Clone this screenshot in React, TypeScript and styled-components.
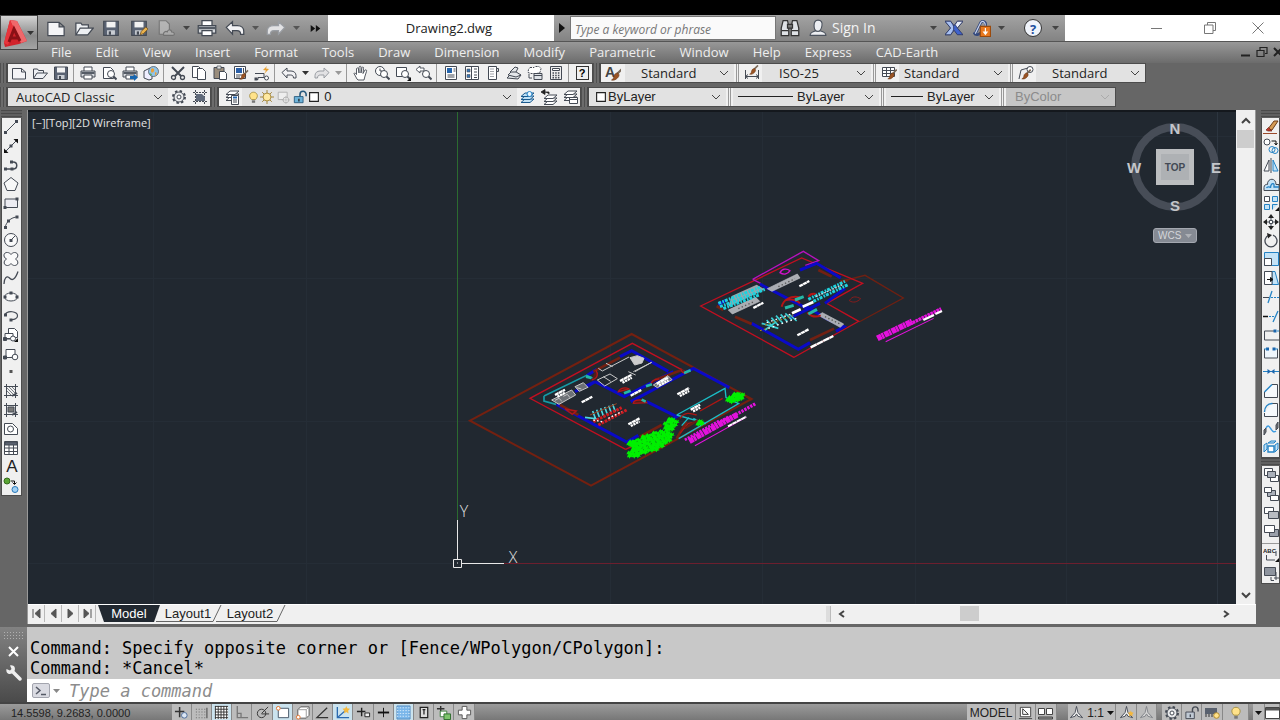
import React from 'react';
import styled, { createGlobalStyle } from 'styled-components';

const ui = '"Open Sans", "Noto Sans", sans-serif';
const arial = '"Liberation Sans", Arial, sans-serif';
const mono = '"DejaVu Sans Mono", "Liberation Mono", monospace';

const GlobalStyle = createGlobalStyle`
  * { box-sizing: border-box; }
  body { margin: 0; background: #666; font-family: ${ui}; overflow: hidden; }
  button, input, select { font: inherit; color: inherit; margin: 0; padding: 0; border: 0; border-radius: 0; background: none; }
  svg { display: block; flex: none; }
`;

/* ---------- icons, all on a 16 unit grid ---------- */
const D = '#444a54';
const B = '#2483c5';
const L = '#c4e3f7';

const paper = <path d="M1.5 3.5h9l4 3.5v7h-13z M10.5 3.5v3.5h4" fill="#f4f4f6" stroke={D} />;
const folder = (
  <g stroke={D} fill="#eef0f3">
    <path d="M1.5 13V4h4l1 1.500h5V8" />
    <path d="M1.500 13.500 5 8h10.500l-4.500 5.500z" />
  </g>
);
const disk = (
  <g>
    <path d="M1.500 2h13v12.500h-13z" fill="#5a6373" stroke={D} />
    <path d="M4 2.500h8v5H4z" fill="#f2f2f2" />
    <path d="M4.500 10h7v4h-7z" fill="#c9cdd3" />
    <path d="M6 11h2v3H6z" fill={D} />
  </g>
);
const printer = (
  <g stroke={D}>
    <path d="M4 6V2h8v4" fill="#fff" />
    <path d="M1 6h14v6H1z" fill="#d5d8dc" />
    <path d="M1.500 7h13v2h-13z" fill="#555c66" stroke="none" />
    <path d="M4 10h8v4H4z" fill="#fff" />
  </g>
);
const undo = <path d="M1 7.500 6 3v3h4c3 0 5 2 5 4.500V13h-2.500c0-2-1-3-3-3H6v3z" fill="#f2f2f4" stroke={D} />;
const redo = <path d="M15 7.500 10 3v3H6c-3 0-5 2-5 4.500V13h2.500c0-2 1-3 3-3H10v3z" fill="#e2e2e4" stroke="#999da3" />;
const glass = (
  <g stroke={D} fill="#fff">
    <circle cx="10" cy="9" r="3.500" />
    <path d="m12.500 11.500 3 3" strokeWidth="2" />
  </g>
);
const layers = (
  <g stroke={D} fill="#fff">
    <path d="m1 13.500 4-3.500h9l-4 3.500z" />
    <path d="m1 10.500 4-3.500h9l-4 3.500z" />
    <path d="m1 7.500 4-3.500h9l-4 3.500z" />
  </g>
);
const gear = (
  <g fill="none" stroke={D}>
    <circle cx="8" cy="8" r="6" strokeWidth="2" strokeDasharray="2.400 2.300" />
    <circle cx="8" cy="8" r="5" fill="#e9eaec" />
    <circle cx="8" cy="8" r="2" fill="#fff" />
  </g>
);
const bulb = (
  <g>
    <path d="M5.500 10.500C1 6 4 1.500 8 1.500s7 4.500 2.500 9z" fill="#ffe28a" stroke="#a08a3a" />
    <path d="M6 11.500h4v3H6z" fill="#777" />
  </g>
);
const lock = (
  <g>
    <path d="M9 8V5a3 3 0 0 1 6 0v2" fill="none" stroke={D} strokeWidth="1.500" />
    <path d="M2 7.500h9v7H2z" fill="#bfc9d4" stroke={D} />
    <path d="M6 10h1.500v3H6z" fill={D} />
  </g>
);
const brush = (
  <g>
    <path d="m15 3-5 5" stroke="#7a6a5a" strokeWidth="2" />
    <path d="M10.500 7c2 1 2 3 0 5s-4 2.500-6 2c2-1 2-2 2.500-4s2-3 3.500-3z" fill="#9a5324" stroke="#64330f" strokeWidth=".6" />
  </g>
);
const star = <path d="m12 1 1 2.500L16 4l-2 2 .5 3L12 7.500 9.500 9l.5-3-2-2 3-.500z" fill="#f5b83d" />;
const compassMark = <path d="M8 1.500 9.500 8l5 5.500L9.500 12 8 9.500 6.500 12l-5 1.500 5-5.500z" fill="#eee" stroke={D} />;
const dot = (x: number, y: number, c = D) => <path key={`${x}-${y}`} d={`M${x - 1.5} ${y - 1.5}h3v3h-3z`} fill={c} />;

const icons: Record<string, React.ReactNode> = {
  new: paper,
  open: folder,
  save: disk,
  saveAs: <>{disk}<path d="m9 14 1-3 4-4 2 2-4 4z" fill="#eab24c" stroke="#6a4b1c" strokeWidth=".7" /></>,
  publishGrey: <g opacity=".65"><path d="M2 1.500h6l3 3v9H2z" fill="#c4c4c4" stroke="#666" /><path d="M6 14.500c-1-3 2-4 3-3 1-3 4-2 4 0 3 0 3 3 1 3z" fill="#bbb" stroke="#666" /></g>,
  print: printer,
  undo,
  redo,
  more: <path d="M1 3 7.500 8 1 13zM8.500 3 15 8l-6.500 5z" fill="#111" />,
  preview: <><path d="M2.500 2.500h7l3 3v8h-10z" fill="#fff" stroke={D} />{glass}</>,
  publish: <>{printer}<path d="M8 11h4V9l4 3.500-4 3.500v-2H8z" fill="#1766b0" /></>,
  globe: <><path d="m1 6 6-3 2 2v9l-3 1-5-2z" fill="#eef" stroke={D} /><circle cx="10.500" cy="6.500" r="5" fill="#8fc3e8" stroke={D} strokeWidth=".7" /><path d="M8 4c2-2 4 0 3 2s-3 2-3 0zM12 7l2 1-2 3z" fill="#e9a13b" /><path d="M6 8l3 1-1 2z" fill="#5aa355" /></>,
  cut: <g stroke={D} fill="none" strokeWidth="1.300"><path d="m2 2 9 9M14 2 5 11" strokeWidth="2" /><circle cx="3.500" cy="12.500" r="2" /><circle cx="12.500" cy="12.500" r="2" /></g>,
  copy: <g stroke={D} fill="#fff"><path d="M1.500 1.500h6l2 2v9h-8z" /><path d="M6.500 3.500h5l3 3v8h-8z" /></g>,
  paste: <><path d="M2 2.500h10v11H2z" fill="#9a8d7c" stroke={D} /><path d="M5 1h4v3H5z" fill="#ddd" stroke={D} strokeWidth=".7" /><path d="M7.500 6.500h5l2 2v6h-7z" fill="#fff" stroke={D} /></>,
  match: <><path d="M1.500 1.500h11v12h-11z" fill="#fff" stroke={D} /><path d="M3 3h6v5H3z" fill="#2a5fa8" /><path d="M3 10h6M3 12h4M10.500 3v5" stroke={D} />{<g transform="translate(3 3) scale(.8)">{brush}</g>}</>,
  blockEdit: <><path d="M1 8.500h9v4H4M1 14.500h3v-2" fill="none" stroke={D} /><circle cx="12.500" cy="13" r="2" fill="#fff" stroke={D} />{dot(2, 14)}<path d="m13 1-4 4 3 .5-2 3.500 5-5-3-.500z" fill="#e8a030" /></>,
  pan: <path d="M4 14 1 8.500c.5-1 1.500-.5 2.500 1L3.500 3.500c1-1 2-.5 2 .5l.500 4V2c.5-1 2-1 2 0v6l1-5.500c.5-1 2-.5 1.500 1L10 8.500l2-3.500c1-.5 2 0 1.500 1.500L12 11l-1 4H5z" fill="#fff" stroke={D} strokeWidth=".9" />,
  zoomTime: <><circle cx="6" cy="6" r="4.500" fill="#fff" stroke={D} /><path d="M6 3.500V6h2.500" fill="none" stroke={D} />{glass}</>,
  zoomWin: <><path d="M1.500 2.500h10v9h-10z" fill="#fff" stroke={D} />{glass}<path d="M16 12v4h-4z" fill="#111" /></>,
  zoomPrev: <>{glass}<path d="M0 4.500 4 1v2h4v3H4v2z" fill="#fff" stroke={D} strokeWidth=".9" /></>,
  props: <><path d="M2.500 1.500h11v13h-11z" fill="#fff" stroke={D} /><path d="M4 3h5v5H4z" fill="#2565ad" /><path d="M10.500 4h2M10.500 6h2M4.500 10h7M4.500 12h7" stroke={D} /></>,
  center: <g stroke={D}><path d="M1.500 1.500h13v13h-13z" fill="#fff" /><path d="M7.500 2v12M10 4h3M10 7h3M10 10h3M10 12.500h3" /><path d="M3 4h3v3H3zM3 9.500h3v3H3z" fill="#3978b8" strokeWidth=".6" /></g>,
  palette: <g stroke={D}><path d="M3.500 1.500h8v13h-8z" fill="#fff" /><path d="M11.500 3.500h2v3h-2z" fill="#ddd" /><path d="M5.500 4h4M5.500 6.500h4M5.500 9h4M5.500 11.500h4" strokeDasharray="1 1" /></g>,
  sheets: <g stroke={D} fill="#e4e7ea"><path d="m1 13 3-3h11l-3 4z" /><path d="m2 10 5-5 8 5-5 2z" /><path d="m4 7 5-5 3 1-2 4z" /></g>,
  markup: <g stroke={D} fill="#fff"><path d="M3 2.500h4l1-1h4l2 2-1 4-3 1H4l-3-1 .5-3z" strokeDasharray="2 1" /><path d="M7 8.500h8v6H7z" fill="#dfe3e8" /><path d="M2 9v4h3M7 10.500h8" /></g>,
  calc: <g stroke={D}><path d="M2.500 1.500h11v13h-11z" fill="#eee" /><path d="M4.500 3.500h7v2h-7z" fill="#fff" /><path d="M4.500 8h7M4.500 10.500h7M4.500 12.800h7" strokeDasharray="1.500 1.200" strokeWidth="1.500" /></g>,
  textStyle: <><text x="0" y="12" fontSize="14" fontFamily={arial} fontWeight="700" fill="#444">A</text>{<g transform="translate(2 1)">{brush}</g>}</>,
  dimStyle: <><path d="M1.500 5v9M14.500 5v9M1.500 11.500h13M4 9.500l-2.500 2L4 13.500M12 9.500l2.500 2-2.500 2" stroke={D} fill="none" /><g transform="translate(2 -2) scale(.8)">{brush}</g></>,
  tableStyle: <><path d="M1.500 2.500h12v9h-12zM1.500 5.500h12M1.500 8.500h12M5.500 3v8M9.500 3v8" stroke={D} fill="#fff" /><g transform="translate(3 2) scale(.85)">{brush}</g></>,
  leaderStyle: <><path d="M1 14 3 5l7-2 1 1" fill="none" stroke={D} /><circle cx="12" cy="4.500" r="3" fill="#fff" stroke={D} /><g transform="translate(0 2) scale(.85)">{brush}</g></>,
  gear,
  workspace: <><path d="M1 3.500h14M1 12.500h14M3.500 1v14M12.500 1v14" stroke={D} strokeDasharray="2 1" /><path d="M4 5h6l3 3v4H4z" fill="#606a7a" /></>,
  layerProps: <><g transform="translate(2 -2)">{layers}</g><path d="M8.500 6.500h7v9h-7z" fill="#fff" stroke={D} /><path d="M10 8.500h4" stroke="#2565ad" strokeWidth="2" /><path d="M10 11h4M10 13h4" stroke={D} /></>,
  bulb,
  sun: <><path d="M8 0v16M0 8h16M2.500 2.500l11 11M13.500 2.500l-11 11" stroke="#9a7b2a" /><circle cx="8" cy="8" r="4.500" fill="#ffe9a0" stroke="#a08030" /></>,
  vpFreeze: <g stroke="#aaa" fill="#eee"><path d="M1.500 1.500h11v9h-11z" /><circle cx="11" cy="11" r="3.500" /><path d="M11 6v10M6 11h10" strokeWidth=".7" /></g>,
  lockBlue: <><path d="M8 8V5a3.500 3.500 0 0 1 7 0v2" fill="none" stroke="#26587c" strokeWidth="1.800" /><path d="M1.500 7.500h10v7h-10z" fill="#6db2d8" stroke="#26587c" /><path d="M6 10h1.500v3H6z" fill="#222" /></>,
  swatch: <path d="M3 3h10v10H3z" fill="#fff" stroke="#222" strokeWidth="1.300" />,
  layerCur: <>{<g stroke="#1b5a8e" fill="#bfe0f5"><path d="m1 13.500 4-3.500h9l-4 3.500z" /><path d="m1 10.500 4-3.500h9l-4 3.500z" /><path d="m1 7.500 4-3.500h9l-4 3.500z" /></g>}<circle cx="9.500" cy="5" r="2.500" fill="#eaf6ff" stroke={B} /></>,
  layerPrev: <><g transform="translate(2 2)">{layers}</g><path d="M0 3 4 .500V5.500zM4 3h4v2" fill="#222" stroke="#222" strokeWidth=".8" /></>,
  layerStates: <><g transform="translate(1 -2)">{layers}</g><path d="M7.500 8.500h8v6h-8zM7.500 10.500h8" fill="#fff" stroke={D} /></>,
  line: <><path d="M2 14 14 2" stroke={D} />{dot(2.500, 13.500)}{dot(13.500, 2.500)}</>,
  xline: <><path d="M2 14 14 2" stroke={D} />{dot(8, 8)}<path d="M1 15v-4.500L5.500 15zM15 1v4.500L10.500 1z" fill="#111" /></>,
  pline: <><path d="M2 12h8c5 0 5-7 0-7H8" fill="none" stroke={D} strokeWidth="1.500" />{dot(2.500, 12)}{dot(9, 12)}{dot(8.500, 5)}</>,
  polygon: <path d="m8 1.500 7 5.500-3 7.500H4L1 7z" fill="#f8f8f8" stroke={D} />,
  rect: <><path d="M2 4h12.500v8.500H2z" fill="#ececf2" stroke={D} />{dot(2, 12.500)}{dot(14, 4)}</>,
  arc: <><path d="M2 14C3 8 8 3 14.500 3" fill="none" stroke={D} />{dot(2.500, 13.500)}{dot(5.500, 7)}{dot(14, 3)}</>,
  circle: <><circle cx="8" cy="8" r="6.500" fill="#fafafa" stroke={D} /><path d="m8 8 4-4" stroke={D} />{dot(8, 8.500)}</>,
  cloud: <path d="M3.500 8C-.500 6 .500 1 4.500 1.500 6 1.500 7 2.500 8 3.500c1-1 2-2 3.500-2 4 0 4.500 4.500 1 6.500 3.500 2 3 6.500-1 6.500-1.500 0-2.500-1-3.500-2-1 1-2 2-3.500 2-4 0-4.500-4.500-1-6.500z" fill="#fafafa" stroke={D} />,
  spline: <path d="M1 14c0-6 3-9 5.500-6S12 10 15 1.500" fill="none" stroke={D} strokeWidth="1.300" />,
  ellipse: <><ellipse cx="8" cy="8" rx="6.500" ry="4" fill="#fafafa" stroke={D} />{dot(2, 8)}{dot(14, 8)}{dot(8, 4)}</>,
  ellArc: <><path d="M2 7c2-5 13-4 12.500 1 0 2-3 4-6.500 3.500" fill="none" stroke={D} strokeWidth="1.200" />{dot(2.500, 7)}{dot(8, 12)}</>,
  insert: <g stroke={D} fill="#fff"><path d="M5.500 6V1.500h6l3 3v6H12" /><path d="M2 11.500V6.500h8v5z" /><circle cx="10" cy="11.500" r="2.500" /><path d="M1 12h6" />{dot(2, 12)}<path d="M15 11v4h-4z" fill="#111" stroke="none" /></g>,
  block: <g stroke={D} fill="#fff"><path d="M3 11.500V3.500h9v6" /><path d="M1 11.500h8" />{dot(2, 11.500)}<circle cx="12" cy="11" r="2.800" /></g>,
  point: dot(8, 7.500, '#555'),
  hatch: <g stroke={D}><path d="M1 3.500h14M1 12.500h14M3.500 1v14M12.500 1v14" /><path d="m4 8 4 4M4 5l7 7M6 4l6 6M9 4l3 3" strokeWidth=".7" /><path d="m9 13 5-3" strokeWidth="2" /></g>,
  gradient: <g stroke={D}><path d="M1 3.500h14M1 12.500h14M3.500 1v14M12.500 1v14" /><path d="M5 5h6v5H5z" fill="#777" /><path d="m9 13 5-3" strokeWidth="2" /></g>,
  region: <g stroke={D} fill="#fff"><path d="M1.500 2.500h8l5 5v6h-13z" /><circle cx="7.500" cy="8" r="3" /></g>,
  table: <g stroke={D}><path d="M1.500 1.500h13v13h-13z" fill="#fff" /><path d="M2 2h12v3H2z" fill="#5b6270" /><path d="M2 8h12M2 11.500h12M6 5v9M10.500 5v9" /></g>,
  addSel: <><circle cx="4" cy="4" r="3" fill="#5aa535" stroke="#356b1d" /><circle cx="12" cy="12.500" r="3" fill="#9fd0f5" stroke="#2a78b8" /><path d="M8 4h3.500v3M9.500 5.500l2 2 2-2" fill="none" stroke="#111" /></>,
  erase: <><path d="M0 14.500h14" stroke="#9b4a2c" /><path d="m5 10 6-8h4l-6 9z" fill="#d39a54" stroke="#6b3d18" /><path d="m3 11 2.500-2.500L9 12H5z" fill="#c0392b" stroke="#6b2418" strokeWidth=".7" /></>,
  copyObj: <><circle cx="4" cy="4" r="3" fill="#fff" stroke={D} /><path d="M8.500 3H13v3.500M11.500 5 13 7l1.500-2" fill="none" stroke="#111" /><g stroke={B} fill="none"><circle cx="9" cy="11.500" r="3" /><circle cx="12" cy="12.500" r="3" /></g></>,
  mirror: <><path d="M6 3v11H1z" fill="#fff" stroke={D} /><path d="M8 1v15" stroke={D} /><path d="M10 3v11h5z" fill={L} stroke={B} /></>,
  offset: <g fill="none"><path d="M1 14.500v-3C1 9 3 8 4.500 8.500 4 2 13 1 13 8.500h3v6z" stroke={D} fill={L} /><path d="M3.500 12c1-2 4-1 4 0 0-5 3-5 3.500-3.500V11h5" stroke={B} strokeWidth="1.300" /></g>,
  array: <g stroke={B} fill={L}><path d="M1.500 1.500h5v5h-5z" fill="#fff" stroke={D} /><path d="M9.500 1.500h5v5h-5zM1.500 9.500h5v5h-5zM9.500 14.500v-5h5" /><path d="M16 12v4h-4z" fill="#111" stroke="none" /></g>,
  move: <><path d="M8 2v12M2 8h12" stroke={D} strokeDasharray="4 4" /><path d="m8 0 3 4H5zM8 16l3-4H5zM0 8l4-3v6zM16 8l-4-3v6z" fill="#222" /><path d="M6.500 6.500h3v3h-3z" fill="#fff" stroke={D} /></>,
  rotate: <><path d="M6 3.200A6 6 0 1 0 10 3.200" fill="none" stroke={D} strokeWidth="1.300" /><path d="m4 1 5 2-4 3.500z" fill="#222" /></>,
  scale: <><path d="M1.500 1.500h14v13h-14z" fill={L} stroke={B} /><path d="M1.500 7.500h7v7h-7z" fill="#fff" stroke={D} /></>,
  stretch: <><path d="M9 1.500h3l3.500 13H9z" fill={L} stroke={B} /><path d="M1.500 1.500H9v13H1.500z" fill="#fff" stroke={D} /><path d="M4 9.500h5M7.500 7.500l2.500 2-2.500 2z" stroke="#111" fill="#111" /></>,
  trim: <><path d="M0 8.500h6" stroke={D} /><path d="M8 8.500h8" stroke={B} strokeDasharray="2 1" /><path d="m5 14 4-12" stroke={B} strokeWidth="1.300" /></>,
  extend: <><path d="M0 8.500h5" stroke="#111" strokeWidth="1.500" /><path d="M6 8.500h5" stroke={B} strokeDasharray="2 1" /><path d="m10 14 5-11" stroke={B} strokeWidth="1.300" /></>,
  breakPt: <><path d="M11 4H1.500v9H16" fill="none" stroke={D} />{dot(12, 4, '#1b66ae')}<path d="M14 4h2" stroke={B} /></>,
  break: <><path d="M1.500 4v9h13V4" fill="#eef5fb" stroke={D} />{dot(4.500, 4, '#1b66ae')}{dot(11, 4, '#1b66ae')}<path d="M1 4h3M12 4h3" stroke={B} /></>,
  join: <><path d="M0 7.500h16" stroke={B} /><path d="m4.500 5 3.500 2.500L4.500 10zM11.500 5 8 7.500l3.500 2.500z" fill="#1b66ae" /></>,
  chamfer: <><path d="M9 1.500h5.500v13h-13V9" fill="#f6f9fc" stroke={D} /><path d="m1.500 9 7.500-7.500" stroke={B} strokeWidth="1.400" /></>,
  fillet: <><path d="M9 1.500h5.500v13h-13V11" fill="#f6f9fc" stroke={D} /><path d="M1.500 10c0-5 3-8.500 8-8.500" fill="none" stroke={B} strokeWidth="1.400" /></>,
  blend: <><path d="M1 14V9l2-2v4zM13 9V4l2-3v6z" fill="#777" stroke={D} /><path d="M3 7c4-7 5 7 10 3" fill="none" stroke="#3d9be0" strokeWidth="1.500" /></>,
  explode: <g stroke={B} fill={L}><path d="m1 6 3-2v6l-3 3zM12 6l3-2v6l-3 3z" /><path d="M5 7h6v6H5z" fill="#fff" strokeWidth="1.400" /><path d="m5 4 3-2h5l-2 2z" /></g>,
  front: <g stroke={D} fill="#fff"><path d="M1.500 1.500h8v7h-8zM7.500 8.500h8v6h-8z" /><path d="M4.500 4.500h8v6h-8z" fill="#aab0ba" /></g>,
  back: <g stroke={D}><path d="M4.500 4.500h8v6h-8z" fill="#aab0ba" /><path d="M1.500 1.500h7v5h-7zM7.500 9.500h8v5h-8z" fill="#fff" /></g>,
  above: <g stroke={D}><path d="M1.500 2.500h9v6h-9z" fill="#fff" /><path d="M5.500 6.500h10v7h-10z" fill="#b9bcc2" /></g>,
  under: <g stroke={D}><path d="M6.500 6.500h9v7h-9z" fill="#9aa0aa" /><path d="M1.500 2.500h10v7h-10z" fill="#fff" /></g>,
  textFront: <><text x="0" y="6" fontSize="6" fontWeight="700" fontFamily={arial} fill="#222">ABC</text><path d="M3.500 8v5H12M13 4v5" fill="none" stroke={D} /><path d="M16 11v4h-4z" fill="#111" /></>,
  hatchBack: <><path d="M1.500 1.500h11v8h-11z" fill="#8e949e" stroke={D} /><path d="M8 11v3.500h3M13 6v8M11 12h5" fill="none" stroke={D} /></>,
  binoculars: <g stroke="#333" fill="#dfe2e6"><path d="M2.500 2h3.500l1 5v7H1V8zM10 2h3.500L15 8v6H9V7z" /><path d="M6 5h4v3H6z" fill="#777" /><path d="M1.500 10h5M9.500 10h5" /></g>,
  user: <g stroke="#4b525d" fill="#eceef2"><path d="M1 14.500c0-3 3-3.500 5-4h4c2 .5 5 1 5 4z" /><path d="M8 1c3 0 4 2 3.500 5S10 11 8 11 4.500 9 4.500 6 5 1 8 1z" /></g>,
  exchange: <g stroke="#26305c" strokeWidth=".7"><path d="M0 2h5l3 4 3-4h5l-5 6 5 6h-5l-3-4-3 4H0l5-6z" fill="#4063cc" /><path d="M0 2h5l2 3c1 2 1 4 0 6l-2 3H0l5-6z" fill="#a9c1f2" /><path d="M11 2h5l-5 6-2-3z" fill="#e8ecf8" /></g>,
  share: <><path d="M2 13 7 3c2-2 5 0 4 3M1 12c1 3 5 2 6 0" fill="none" stroke="#33497e" strokeWidth="2.500" /><path d="M2 13 7 3c2-2 4 0 4 3" fill="none" stroke="#c7d3ee" /><path d="M6.500 6.500h9v9h-9z" fill="#e8781e" stroke="#9b4a0c" /><path d="M11 8v4M9.500 11.500h3L11 13.500z" fill="#fff" stroke="#fff" /></>,
  snap: <><path d="M1 7h10M6 2v11" stroke="#333" strokeWidth="1.600" /><circle cx="11" cy="11" r="3" fill="#dbe6f4" stroke="#4b6a96" /></>,
  dots: <g fill="#666">{[2, 5, 8, 11].map(x => [4, 7, 10, 13].map(y => <path key={`${x}${y}`} d={`M${x} ${y}h1v1h-1z`} />))}<path d="M13 3h1.500v11H13z" /></g>,
  grid: <><path d="M1 1h14v14H1z" fill="#fff" /><path d="M1 1.500h14M1 4.500h14M1 7.500h14M1 10.500h14M1 13.500h14M1.500 1v14M4.500 1v14M7.500 1v14M10.500 1v14M13.500 1v14" stroke="#333" /></>,
  ortho: <path d="M3.500 1v12.500H15M3.500 9h4v4" fill="none" stroke="#777" strokeWidth="1.400" />,
  polar: <g fill="none" stroke="#333"><circle cx="7" cy="9" r="4.500" /><path d="m7 9 7-7M7 9.500h8" /></g>,
  osnap: <><path d="M3.500 3.500h11v10h-11z" fill="#fff" stroke="#456" /><circle cx="3.500" cy="3.500" r="2" fill="#fff" stroke="#e0702a" /></>,
  osnap3d: <><path d="m3 5 3-3h9v9l-3 3H3z" fill="#fff" stroke="#555" /><path d="M3 5h9v9M12 5l3-3" fill="none" stroke="#999" /><circle cx="3.500" cy="13" r="2" fill="#fff" stroke="#e0702a" /></>,
  otrack: <path d="M14 13.500H2L13 3" fill="none" stroke="#333" strokeWidth="1.300" />,
  ducs: <><path d="M2.500 2v11.500H15M3 13l8-7" fill="none" stroke="#2a6ab0" strokeWidth="1.400" /><g transform="translate(0 0)">{star}</g></>,
  dyn: <><path d="M1 7h9M6 3v9" stroke="#222" strokeWidth="1.500" /><path d="M9.500 8.500h5v4h-5z" fill="#eee" stroke="#222" /></>,
  lwt: <><path d="M2 8h12" stroke="#111" strokeWidth="2" /><path d="M8 3v10" stroke="#111" /></>,
  tpy: <><path d="M1 1h14v14H1z" fill="#7ab6ea" stroke="#5b8fc0" /><path d="M1 3h14M1 6h14M1 9h14M1 12h14" stroke="#dcedfb" strokeDasharray="1.500 1.500" /></>,
  qp: <path d="M4.500 2.500h8v11h-8zM7 5h3M8.500 5v5" fill="#ddd" stroke="#222" strokeWidth="1.300" />,
  cycle: <><path d="M1 4h8M5 1v7" stroke="#333" strokeWidth="1.500" /><path d="M4.500 6.500h7v6h-7z" fill="#fff" stroke="#3a7f3a" /><path d="M8.500 9.500h7v6h-7z" fill="#7cc46b" stroke="#2c6b2c" /></>,
  plus: <path d="M5.500 1.500h5v4h4v5h-4v4h-5v-4h-4v-5h4z" fill="#fff" stroke="#555" />,
  layoutTri: <><path d="M2.500 2.500h11v10h-11z" fill="#fff" stroke="#444" /><path d="M5 4v6h6z" fill="none" stroke="#333" /><path d="M1 14.500h14" stroke="#444" /></>,
  quickView: <g stroke="#444" fill="#fff"><path d="M.500 3.500h6v6h-6zM8.500 3.500h6v6h-6z" /><path d="M.500 12h14v2H.500z" fill="#999" /></g>,
  annot: compassMark,
  annotStar: <>{compassMark}<g transform="translate(3 5) scale(.8)">{star}</g></>,
  annotGrey: <g opacity=".5">{compassMark}</g>,
  lock,
  hardware: <><path d="M1 3h12v6H1z" fill="#59616e" /><path d="M2 9v3M5 9v3M8 9v3M11 9v3" stroke="#333" /><circle cx="12.500" cy="10.500" r="2.800" fill="#ffe28a" stroke="#b08a30" /></>,
  clean: <><path d="M1.500 2.500h14v11h-14z" fill="#fff" stroke="#444" /><path d="M2 3h13v2.500H2z" fill="#555" /></>,
};

const Icon = ({ name, size = 16 }: { name: string; size?: number }) => (
  <svg width={size} height={size} viewBox="0 0 16 16" aria-hidden="true">{icons[name]}</svg>
);
const Caret = ({ color = '#333' }: { color?: string }) => (
  <svg width="7" height="4" viewBox="0 0 7 4" aria-hidden="true"><path d="M0 0h7L3.500 4z" fill={color} /></svg>
);
const Chevron = ({ dir = 'down', color = '#444', bold }: { dir?: string; color?: string; bold?: boolean }) => {
  const d: Record<string, string> = { down: 'm1 3 4 4 4-4', up: 'm1 7 4-4 4 4', left: 'M7 2 3 5l4 3', right: 'm3 2 4 3-4 3' };
  return (
    <svg width="10" height="10" viewBox="0 0 10 10" aria-hidden="true">
      <path d={d[dir]} fill="none" stroke={color} strokeWidth={bold ? 2 : 1} />
    </svg>
  );
};

/* ---------- frame ---------- */
const Window = styled.div`
  display: flex;
  flex-direction: column;
  height: 100vh;
  overflow: hidden;
  background: #666;
  border-top: 15px solid #000;
`;
const TitleBar = styled.header`
  flex: none;
  display: flex;
  height: 27px;
  background: linear-gradient(#a3a3a3, #838383);
  border-bottom: 1px solid #555;
`;
const AppSlot = styled.div`
  position: relative;
  width: 42px;
  flex: none;
`;
const AppButton = styled.button`
  position: absolute;
  z-index: 2;
  left: 0;
  top: 0;
  width: 38px;
  height: 35px;
  display: flex;
  align-items: center;
  justify-content: space-between;
  padding: 0 3px 0 2px;
  background: linear-gradient(#d4d4d4, #8a8a8a 60%, #a4a4a4);
  border: 1px solid #444;
`;
const Cell = styled.button<{ $w: number }>`
  flex: none;
  width: ${p => p.$w}px;
  display: flex;
  align-items: center;
  justify-content: center;
`;
const FileTitle = styled.h1`
  flex: 1;
  margin: 0;
  background: #fff;
  color: #222;
  font-size: 13px;
  line-height: 26px;
  font-weight: 400;
  text-align: center;
  padding-left: 16px;
`;
const Search = styled.input`
  width: 206px;
  height: 24px;
  margin: 1px 0;
  padding: 2px 4px 0;
  background: #fafafa;
  border: 1px solid #777;
  font-size: 12px;
  font-style: italic;
  &::placeholder { color: #777; opacity: 1; }
`;
const SignIn = styled.button`
  width: 94px;
  color: #f4f4f4;
  font-size: 14px;
  line-height: 26px;
  text-align: left;
`;
const HelpDot = styled.span`
  display: grid;
  place-items: center;
  width: 18px;
  height: 18px;
  border: 1px solid #333;
  border-radius: 50%;
  background: #f0f4fb;
  color: #1d4f9f;
  font-size: 13px;
  font-weight: 700;
`;
const WindowControls = styled.div`
  display: flex;
  justify-content: flex-end;
  width: 215px;
  background: #fff;
`;

const MenuBar = styled.nav`
  flex: none;
  display: flex;
  align-items: center;
  height: 21px;
  padding: 0 0 2px 51px;
  background: linear-gradient(#989898, #6c6c6c);
  gap: 24px;
  color: #eee;
  font-size: 13px;
  line-height: 18px;
`;
const MdiControls = styled.div`
  display: flex;
  align-items: center;
  gap: 4px;
  margin-left: auto;
  margin-right: -4px;
`;

/* ---------- toolbars ---------- */
const Row = styled.div<{ $h: number }>`
  flex: none;
  display: flex;
  align-items: flex-start;
  height: ${p => p.$h}px;
`;
const Grip = styled.div`
  flex: none;
  width: 8px;
  height: 20px;
  background: repeating-linear-gradient(90deg, #505050 0 1px, #6c6c6c 1px 3px);
  border-right: 2px solid #4a4a4a;
`;
const Panel = styled.div`
  display: flex;
  flex: none;
  height: 20px;
  background: #f0f0f0;
  border: 1px solid #4c4c4c;
  border-width: 1px 1px 1px 0;
`;
const Sep = styled.span`
  flex: none;
  width: 2px;
  margin: 0 2px;
  border-left: 1px solid #999;
`;
const DoubleSep = styled.span`
  flex: none;
  width: 3px;
  margin: 0 2px;
  border: 1px solid #999;
  border-width: 0 1px;
`;
const Combo = styled.label<{ $w: number; $off?: boolean }>`
  position: relative;
  flex: none;
  display: flex;
  align-items: center;
  width: ${p => p.$w}px;
  padding: 0 5px;
  background: ${p => (p.$off ? '#c6c6c6' : '#e2e2e2')};
  color: ${p => (p.$off ? '#8b8b8b' : '#222')};
  font-size: 12px;
`;
const Select = styled.select<{ $pad: number; $arial?: boolean }>`
  appearance: none;
  flex: 1;
  min-width: 0;
  height: 18px;
  line-height: 18px;
  padding-left: ${p => p.$pad}px;
  font-family: ${p => (p.$arial ? '"Liberation Sans", Arial, sans-serif' : 'inherit')};
  font-size: 13px;
  &:disabled { opacity: 1; color: inherit; }
`;

type PickProps = { w: number; value: string; label: string; pad?: number; rule?: number; arial?: boolean; off?: boolean; children?: React.ReactNode };
const Pick = ({ w, value, label, pad = 0, rule, arial: useArial, off, children }: PickProps) => (
  <Combo $w={w} $off={off}>
    {children}
    {rule && <svg width={rule} height="2" aria-hidden="true"><path d={`M0 .5h${rule}`} stroke="#222" /></svg>}
    <Select $pad={pad} $arial={useArial} aria-label={label} disabled={off}><option>{value}</option></Select>
    <Chevron color={off ? '#aaa' : '#444'} />
  </Combo>
);

const Tool = ({ name, w = 21 }: { name: string; w?: number }) => (
  <Cell $w={w} type="button" aria-label={name}><Icon name={name} /></Cell>
);
const Drop = ({ color, w = 12 }: { color?: string; w?: number }) => (
  <Cell $w={w} type="button" aria-label="More options"><Caret color={color} /></Cell>
);
const HelpBox = styled.span`
  display: grid;
  place-items: center;
  width: 13px;
  height: 14px;
  border: 1px solid #333;
  font: 700 11px ${arial};
`;

/* ---------- work area ---------- */
const Work = styled.main`
  flex: 1;
  min-height: 0;
  display: grid;
  grid-template-columns: 28px minmax(0, 1fr) 20px 24px;
  grid-template-rows: minmax(0, 1fr) 20px;
  padding-bottom: 3px;
`;
const Dock = styled.aside<{ $right?: boolean }>`
  grid-row: 1 / 3;
  grid-column: ${p => (p.$right ? 4 : 1)};
  display: flex;
  flex-direction: column;
  padding-left: ${p => (p.$right ? 5 : 1)}px;
  padding-right: ${p => (p.$right ? 0 : 5)}px;
  border-right: ${p => (p.$right ? 0 : 1)}px solid #999;
`;
const DockGrip = styled.div`
  flex: none;
  height: 8px;
  background: repeating-linear-gradient(#4a4a4a 0 1px, #606060 1px 3px);
`;
const DockTools = styled.div<{ $h: number }>`
  flex: none;
  display: flex;
  flex-direction: column;
  height: ${p => p.$h}px;
  background: #f0f0f0;
  border: 1px solid #4c4c4c;
  border-top: 0;
`;
const DockButton = styled.button`
  flex: 1;
  min-height: 0;
  display: flex;
  align-items: center;
  padding-left: 1px;
`;
const TextTool = styled(DockButton)`
  justify-content: center;
  font: 17px/18px ${arial};
  color: #222;
`;
const Rule = styled.span`
  height: 1px;
  margin: 2px 0;
  background: #999;
`;
const Canvas = styled.section`
  position: relative;
  min-width: 0;
  background: #212830;
  border-top: 2px solid #14181d;
  overflow: hidden;
`;
const ViewLabel = styled.div`
  position: absolute;
  left: 4px;
  top: 3px;
  color: #e4e4e4;
  font-size: 11px;
  line-height: 16px;
`;
const Compass = styled.div`
  position: absolute;
  right: 10px;
  top: 4px;
  width: 102px;
  display: flex;
  flex-direction: column;
  align-items: center;
  gap: 10px;
`;
const TopFace = styled.button`
  position: absolute;
  left: 32px;
  top: 33px;
  width: 38px;
  height: 36px;
  background: #aeb1b4;
  border: 5px solid #bcbec0;
  color: #434a55;
  font: 700 10px ${arial};
`;
const Wcs = styled.button`
  display: flex;
  align-items: center;
  justify-content: space-between;
  width: 44px;
  height: 15px;
  padding: 0 4px;
  border: 1px solid #a4a8b0;
  border-radius: 3px;
  background: #858a93;
  color: #d4d6da;
  font: 10px ${arial};
`;
const VScroll = styled.div`
  display: flex;
  flex-direction: column;
  align-items: center;
  background: #f0f0f0;
  padding: 6px 0 4px;
  border-right: 1px solid #999;
`;
const VThumb = styled.div`
  width: 17px;
  height: 18px;
  margin: 4px 0 auto;
  background: #cdcdcd;
`;
const TabRow = styled.div`
  grid-column: 2 / 4;
  display: flex;
  align-items: flex-start;
  background: #f0f0f0;
  border-top: 1px solid #fff;
`;
const NavButton = styled.button`
  display: grid;
  place-items: center;
  width: 17px;
  height: 17px;
  border-right: 1px solid #b8b8b8;
`;
const TabButton = styled.button<{ $w: number; $on?: boolean }>`
  position: relative;
  width: ${p => p.$w}px;
  height: 17px;
  color: ${p => (p.$on ? '#fff' : '#222')};
  font: 13px/17px ${arial};
  span { position: relative; }
  svg { position: absolute; left: 0; top: 0; width: 100%; height: 100%; overflow: visible; }
`;
const HScroll = styled.div`
  flex: none;
  width: 35%;
  height: 17px;
  display: flex;
  align-items: center;
  margin-left: auto;
  padding: 0 25px 0 0;
`;
const Splitter = styled.span`
  width: 5px;
  height: 16px;
  margin-right: 6px;
  background: #ddd;
  border-right: 1px solid #bbb;
`;
const HThumb = styled.div`
  width: 19px;
  height: 15px;
  margin: 0 auto 0 113px;
  background: #cdcdcd;
`;

/* ---------- command line and status ---------- */
const CommandArea = styled.section`
  flex: none;
  display: flex;
  height: 75px;
`;
const CommandGrip = styled.div`
  flex: none;
  width: 27px;
  display: flex;
  flex-direction: column;
  align-items: center;
  gap: 7px;
  padding-top: 4px;
  background: linear-gradient(#828282, #4a4a4a);
`;
const CommandBody = styled.div`
  flex: 1;
  display: flex;
  flex-direction: column;
  background: #c8c8c8;
`;
const History = styled.div`
  flex: 1;
  padding: 11px 3px 0;
  color: #000;
  font: 17px/20px ${mono};
  white-space: pre;
`;
const Prompt = styled.form`
  display: flex;
  align-items: center;
  height: 23px;
  padding-left: 5px;
  background: #fff;
`;
const CommandInput = styled.input`
  flex: 1;
  padding-left: 7px;
  font: italic 17px/20px ${mono};
  outline: 0;
  &::placeholder { color: #8c8c8c; opacity: 1; }
`;
const Status = styled.footer`
  flex: none;
  display: flex;
  height: 18px;
  border-top: 2px solid #444;
  background: linear-gradient(#9b9b9b, #777);
  color: #222;
  font: 12px ${arial};
`;
const Coords = styled.output`
  width: 172px;
  padding-left: 11px;
  font-size: 11px;
  line-height: 18px;
`;
const StatusCell = styled.button<{ $w: number; $on?: boolean }>`
  flex: none;
  display: flex;
  align-items: center;
  justify-content: center;
  gap: 3px;
  width: ${p => p.$w}px;
  padding-top: 1px;
  background: ${p => (p.$on ? '#cbe3ee' : '#bcbcbc')};
  border-right: 1px solid #888;
`;
const Spacer = styled.span<{ $w?: number }>`
  ${p => (p.$w ? `flex: none; width: ${p.$w}px;` : 'flex: 1;')}
`;

/* ---------- model space drawing ---------- */
const leaves = (cx: number, cy: number, rx: number, ry: number, n: number) =>
  Array.from({ length: n }, (_, i) => {
    const a = i * 2.4;
    const r = Math.sqrt((i + 0.5) / n);
    const x = cx + Math.cos(a) * rx * r;
    const y = cy + Math.sin(a) * ry * r - Math.cos(a) * r * rx * 0.3;
    return <path key={i} d={`M${x - 7} ${y}l5-6 3 4 6-3-2 6 4 3-7 1-3 5-3-5-5 1z`} />;
  });

const Tag = ({ x, y, w = 26, two }: { x: number; y: number; w?: number; two?: boolean }) => (
  <g transform={`translate(${x} ${y}) rotate(-28)`} stroke="#fff" strokeWidth="7">
    <path d={`M0 0h${w}`} strokeDasharray="12 1" />
    {two && <path d={`M4 8h${w - 8}`} strokeDasharray="7 2" />}
  </g>
);

const GroundPlan = () => (
  <g transform="translate(460 325) scale(.33333)" fill="none" strokeWidth="4">
    <path d="M30 287 515 27 875 222 393 482z" stroke="#742010" strokeWidth="6" />
    <path d="M497 373 210 220 517 55 680 142M497 373l30-14" stroke="#c10f20" />
    <g stroke="#0a0ac8" strokeWidth="9">
      <path d="m480 95 35-18 110 62M380 152l30-19M290 238l210 113 35-20M405 170l88 45 147-75M405 170l-25 15M512 230 700 130l108 58M560 230l90 45-30 18M345 200l60-30" />
    </g>
    <path d="m252 213 128-62 22 10M252 213v15l36 10" stroke="#169aa6" strokeWidth="5" />
    <path d="m300 240 55 30M400 140l80-42M585 165l80-30M540 335l65-35M650 340l30-50" stroke="#722012" strokeWidth="8" />
    <path d="M315 252l22 16 12-10zM520 235c0-12 30-14 40-2zM475 200c5-12 22-14 32-8zM395 165c20-5 20-20 12-30M662 130c2 10 8 16 20 15M572 180c2-12 12-18 25-18" stroke="#b01818" fill="#571c18" />
    <g stroke="#c8c8c8" strokeWidth="3">
      <path d="m415 130 12 8 80-42M520 140l55-28M505 140l22 10M438 115l20 10M412 165l38-18 22 14-38 22zM430 155l22 14M575 112l-50 28" />
      <path d="m275 225 60-30 12 15-50 28zM345 185l25-12 14 14-26 12zM580 180l44-28 12 12-44 24z" fill="#6d7176" />
      <path d="m285 226 12-6 8 8M310 214l12-6 8 10M350 188l14 4M590 182l8-8M606 172l8-8" />
      <path d="m510 98 22-6 20 8-6 14-22 6z" fill="#ccc" />
    </g>
    <g stroke="#4fd7e0" strokeWidth="5">
      <path d="m398 258 8 22M410 254l8 22M422 250l8 22M434 246l8 22M446 242l8 22M458 238l8 22M375 277l40 5" />
      <path d="m492 205 20-8M558 184l18-6M545 224l12 6M672 144l20-8M378 155l16 4" stroke="#26b8a6" strokeWidth="8" />
      <path d="m650 270 145-80 3 28 38 18-180 105M650 270l70 20 18 6M665 302l22-25M700 280l28 15" strokeWidth="4" stroke="#1bbdc6" />
    </g>
    <path d="M390 270l80-34" stroke="#9c4420" strokeWidth="3" />
    <path d="m415 300 85-45M400 290l85-42" stroke="#d01c20" strokeWidth="9" strokeDasharray="8 3" />
    <path d="m400 285 30 6M445 280l40-20" stroke="#fff" strokeDasharray="5 6" />
    <path d="m720 258 68-38M660 280c15-20 30-16 50-10M660 325l25-30 32-6" stroke="#ac1714" />
    <path d="m675 310 38-24" stroke="#661f14" strokeWidth="7" />
    <path d="m845 205 30 20" stroke="#742010" strokeWidth="6" />
    <Tag x={365} y={232} w={36} /><Tag x={480} y={168} w={40} two /><Tag x={512} y={212} w={36} />
    <Tag x={652} y={208} w={40} two /><Tag x={505} y={298} w={38} two /><Tag x={692} y={254} w={32} two />
    <Tag x={285} y={210} w={34} two /><Tag x={590} y={176} w={40} two />
    <g fill="#00f000">
      {leaves(575, 350, 62, 28, 70)}{leaves(632, 298, 20, 18, 16)}{leaves(528, 382, 24, 12, 14)}{leaves(520, 352, 16, 6, 8)}
      {leaves(828, 216, 24, 12, 18)}{leaves(720, 292, 10, 5, 4)}
    </g>
    <path d="M530 350l70-25M545 370l70-32M535 380l40-15M610 300l40-8" stroke="#128a16" strokeWidth="3" strokeDasharray="3 12" />
    <g transform="translate(690 352) rotate(-29)" stroke="#e312dd">
      <path d="M0-4h165" strokeWidth="17" strokeDasharray="14 1 8 2" />
      <path d="M-10-14h120" strokeWidth="8" strokeDasharray="7 3" />
      <path d="M100-10h40M140-6h90" strokeWidth="10" strokeDasharray="7 3" />
      <path d="M8 16h175" strokeWidth="3" />
    </g>
    <g transform="translate(804 304) rotate(-28)" stroke="#fff"><path d="M0 0h62" strokeWidth="6" strokeDasharray="14 1" /></g>
  </g>
);

const UpperPlan = () => (
  <g transform="translate(690 240) scale(.33333)" fill="none" strokeWidth="4">
    <path d="m470 120 55-14 115 68-133 72" stroke="#6e2012" strokeWidth="4" />
    <path d="M478 182c10-16 22-12 34-6-10 10-22 14-34 6z" stroke="#861c1c" strokeWidth="3" />
    <path d="M312 352 32 198 335 54 518 130 410 190 506 244z" stroke="#c10f20" />
    <path d="m188 118 152-84 46 28-40 14M188 118l24 12" stroke="#b812bd" />
    <path d="M270 98c6-14 22-12 30-6-6 10-18 14-30 6z" stroke="#d511cc" />
    <g stroke="#0a0ac8" strokeWidth="9">
      <path d="m232 144 120 62M232 144l-22-12M330 90l50-20 72 44M185 250l140 78 35-20M405 190l60-45M350 200l60 36 52 24-24 14M85 195l22-14M390 190l-90 44" />
    </g>
    <path d="M385 90l40 20M450 125l25-5M135 230l50 22M360 300l72-34M80 198l20 12" stroke="#722012" strokeWidth="8" />
    <path d="m232 146 90-44 8 12-84 40zM115 210l82-38 12 12-82 38zM385 226l12-8 64 34-10 10z" fill="#aaadb2" stroke="#c2c4c8" strokeWidth="2" />
    <path d="m265 140 50-24M145 206l45-20M405 230l45 22" stroke="#555" strokeWidth="4" strokeDasharray="4 7" />
    <path d="m125 168 75-34 24 14-110 54z" fill="#9da5aa" />
    <path d="m85 190 125-48M90 200l135-52M100 206l110-42M355 178l110-54M370 184l104-50" stroke="#1fd1dd" strokeWidth="9" strokeDasharray="9 4 5 3" />
    <path d="m378 170 80-36" stroke="#cfd5d8" strokeWidth="4" strokeDasharray="5 4" />
    <g stroke="#39cdd2" strokeWidth="5"><path d="m230 240 20 22M244 233l20 22M258 227l20 22M272 223l20 22M286 220l20 20M215 250l50 15M225 270l30-22M300 225l20 18" /></g>
    <path d="m230 248 80-28M235 265l85-30" stroke="#fff" strokeWidth="4" strokeDasharray="5 9" />
    <path d="m225 255 85-28M210 272l25-8" stroke="#a6851d" strokeWidth="3" strokeDasharray="6 6" />
    <path d="M275 200c5-20 25-34 55-28M330 190c-10-10-25-14-42-10M352 218c15 14 28 14 40 8M355 170c5-8 15-10 22-8" stroke="#b41515" strokeWidth="6" />
    <path d="m285 204 26-8M315 180l26-10M355 222l26-14" stroke="#26b8a6" strokeWidth="9" />
    <path d="m306 220 26-12M338 200l32-14" stroke="#fff" strokeWidth="8" />
    <Tag x={190} y={204} w={34} /><Tag x={328} y={139} w={34} /><Tag x={322} y={286} w={38} />
    <path d="m362 322 68-34" stroke="#fff" strokeWidth="7" strokeDasharray="20 1" />
    <g transform="translate(570 298) rotate(-26)" stroke="#e312dd">
      <path d="M-6-6h116" strokeWidth="18" strokeDasharray="14 1 7 2" />
      <path d="M90-2h115" strokeWidth="10" strokeDasharray="8 2" />
      <path d="M12 14h160" strokeWidth="3" />
    </g>
    <path d="m700 240 32-15M736 222l20-9" stroke="#fff" strokeWidth="7" />
  </g>
);

const ModelSpace = () => (
  <svg width="100%" height="100%" viewBox="28 112 1208 492" preserveAspectRatio="xMinYMin slice" role="img" aria-label="Floor plans in model space">
    <path d="M153.500 112v492M306.500 112v492M610.500 112v492M762.500 112v492M915.500 112v492M1066.500 112v492M28 136.500h1208M28 278.500h1208M28 421.500h1208M28 563.500h425" stroke="#252d36" />
    <path d="M1217.500 112v492" stroke="#2c353f" />
    <path d="M457.500 112v408" stroke="#2c6b30" />
    <path d="M503 563.500h733" stroke="#6c1f2e" />
    <GroundPlan />
    <UpperPlan />
    <path d="M457.500 520v39M461 563.500h43M453.500 559.500h8v8h-8zM457 563h1" stroke="#e8e8e8" fill="none" />
    <g fill="#e0e0e0" fontFamily={ui} fontWeight="300" fontSize="16" textAnchor="middle">
      <text x="464" y="517">Y</text>
      <text x="513" y="563">X</text>
    </g>
  </svg>
);

const NavCube = () => (
  <Compass>
    <svg width="102" height="102" viewBox="0 0 102 102" aria-hidden="true">
      <circle cx="51" cy="51" r="40" fill="none" stroke="#474d57" strokeWidth="8" />
      <g fill="#c4c6ca" fontFamily={arial} fontWeight="700" fontSize="15" textAnchor="middle">
        <text x="51" y="18">N</text><text x="51" y="95">S</text><text x="10" y="57">W</text><text x="92" y="57">E</text>
      </g>
    </svg>
    <TopFace type="button">TOP</TopFace>
    <Wcs type="button">WCS<Caret color="#aeb1b6" /></Wcs>
  </Compass>
);

const Tab = ({ w, on, label }: { w: number; on?: boolean; label: string }) => (
  <TabButton type="button" $w={w} $on={on}>
    <svg viewBox={`0 0 ${w} 17`} aria-hidden="true">
      {on
        ? <path d={`M-2 0h${w + 4}l-6 17H4z`} fill="#212830" />
        : <path d={`M${w + 3} 0l-8 16.500H-2`} fill="none" stroke="#666" />}
    </svg>
    <span>{label}</span>
  </TabButton>
);

const menu = ['File', 'Edit', 'View', 'Insert', 'Format', 'Tools', 'Draw', 'Dimension', 'Modify', 'Parametric', 'Window', 'Help', 'Express', 'CAD-Earth'];
const standard = [
  ['new', 'open', 'save'], ['print', 'preview', 'publish', 'globe'], ['cut', 'copy', 'paste', 'match', 'blockEdit'],
];
const views = [['pan', 'zoomTime', 'zoomWin', 'zoomPrev'], ['props', 'center', 'palette', 'sheets', 'markup', 'calc']];
const draw = ['line', 'xline', 'pline', 'polygon', 'rect', 'arc', 'circle', 'cloud', 'spline', 'ellipse', 'ellArc', 'insert', 'block', 'point', 'hatch', 'gradient', 'region', 'table'];
const modify = ['erase', 'copyObj', 'mirror', 'offset', 'array', 'move', 'rotate', 'scale', 'stretch', 'trim', 'extend', 'breakPt', 'break', 'join', 'chamfer', 'fillet', 'blend', 'explode'];
const aids = ['snap', 'dots', 'grid', 'ortho', 'polar', 'osnap', 'osnap3d', 'otrack', 'ducs', 'dyn', 'lwt', 'tpy', 'qp', 'cycle', 'plus'];
const aidsOn = ['grid', 'osnap', 'ducs', 'tpy'];
const navPaths = ['M3 2v9M10 2v9L5 6.500z', 'M9 2v9L4 6.500z', 'M4 2v9l5-4.500z', 'M10 2v9M3 2v9l5-4.500z'];

const Big = ({ name, w, size = 20 }: { name: string; w: number; size?: number }) => (
  <Cell $w={w} type="button" aria-label={name}><Icon name={name} size={size} /></Cell>
);
const DockTool = ({ name }: { name: string }) => (
  <DockButton type="button" aria-label={name}><Icon name={name} /></DockButton>
);

export default function App() {
  return (
    <Window>
      <GlobalStyle />
      <TitleBar>
        <AppSlot>
          <AppButton type="button" aria-label="Application menu">
            <svg width="24" height="28" viewBox="0 0 24 28" aria-hidden="true">
              <path d="M7 1l7 1 10 20-8 3-14 3-1-4z" fill="#d2222b" />
              <path d="M7 1l7 1 10 20-6 2-7-14z" fill="#f0686b" />
              <path d="M7 1l4 9L5 26l-4-2z" fill="#e8353c" />
              <path d="M6 23 11 10l6 12M8 19h8" fill="none" stroke="#8a1016" strokeWidth="3" />
            </svg>
            <Caret />
          </AppButton>
        </AppSlot>
        <Big name="new" w={28} /><Big name="open" w={27} /><Big name="save" w={28} size={18} /><Big name="saveAs" w={27} size={18} />
        <Big name="publishGrey" w={27} size={18} /><Drop w={14} color="#444" />
        <Big name="print" w={28} /><Big name="undo" w={27} /><Drop w={14} color="#555" />
        <Big name="redo" w={27} /><Drop w={14} color="#555" /><Big name="more" w={25} size={11} />
        <FileTitle>Drawing2.dwg</FileTitle>
        <Cell $w={16} type="button" aria-label="Expand search">
          <svg width="6" height="10" viewBox="0 0 6 10"><path d="M0 0v10l6-5z" fill="#111" /></svg>
        </Cell>
        <Search aria-label="Search" placeholder="Type a keyword or phrase" />
        <Big name="binoculars" w={28} size={20} /><Big name="user" w={28} size={18} />
        <SignIn type="button">Sign In</SignIn>
        <Drop w={14} color="#444" /><Big name="exchange" w={28} size={18} /><Big name="share" w={28} size={18} /><Drop w={10} color="#444" />
        <Spacer $w={15} />
        <Cell $w={24} type="button" aria-label="Help"><HelpDot>?</HelpDot></Cell>
        <Drop w={20} color="#444" />
        <WindowControls>
          {['M0 6.500h11', 'M3.500 3V.500h8v8H9M.500 3h8.500v8.500H.500z', 'M.500.500l11 11M11.500.500l-11 11'].map((d, i) => (
            <Cell key={d} $w={i === 2 ? 44 : 53} type="button" aria-label={['Minimize', 'Restore', 'Close'][i]}>
              <svg width="12" height="12" viewBox="0 0 12 12"><path d={d} fill="none" stroke="#777" /></svg>
            </Cell>
          ))}
        </WindowControls>
      </TitleBar>

      <MenuBar>
        {menu.map(m => <button key={m} type="button">{m}</button>)}
        <MdiControls>
          {['M1 9.500h9', 'M4 4V1.500h7v6H9M1 4.500h7v6H1z', 'm2 2 8 8M10 2l-8 8'].map((d, i) => (
            <button key={d} type="button" aria-label={['Minimize drawing', 'Restore drawing', 'Close drawing'][i]}>
              <svg width="12" height="12" viewBox="0 0 12 12"><path d={d} fill="none" stroke="#222" strokeWidth={i === 1 ? 1.2 : 2} /></svg>
            </button>
          ))}
        </MdiControls>
      </MenuBar>

      <Row $h={24}>
        <Grip />
        <Panel>
          {standard.map((g, i) => <React.Fragment key={i}>{g.map(n => <Tool key={n} name={n} />)}<Sep /></React.Fragment>)}
          <Tool name="undo" /><Drop /><Tool name="redo" /><Drop color="#999" /><Sep />
          {views.map((g, i) => <React.Fragment key={i}>{g.map(n => <Tool key={n} name={n} />)}<Sep /></React.Fragment>)}
          <Cell $w={20} type="button" aria-label="Help"><HelpBox>?</HelpBox></Cell>
        </Panel>
        <Grip />
        <Panel>
          <Tool name="textStyle" w={24} />
          <Pick w={109} value="Standard" label="Text style" pad={11} />
          <DoubleSep /><Tool name="dimStyle" />
          <Pick w={109} value="ISO-25" label="Dimension style" pad={12} />
          <DoubleSep /><Tool name="tableStyle" />
          <Pick w={109} value="Standard" label="Table style" />
          <DoubleSep /><Tool name="leaderStyle" />
          <Pick w={109} value="Standard" label="Multileader style" pad={11} />
        </Panel>
      </Row>

      <Row $h={23}>
        <Grip />
        <Panel>
          <Pick w={160} value="AutoCAD Classic" label="Workspace" pad={3} />
          <Tool name="gear" /><Tool name="workspace" />
        </Panel>
        <Grip />
        <Panel>
          <Tool name="layerProps" w={23} />
          <Pick w={275} value="0" label="Layer" pad={3} arial>
            <Icon name="bulb" size={13} /><Icon name="sun" size={14} />&nbsp;<Icon name="vpFreeze" size={13} />&nbsp;<Icon name="lockBlue" size={14} /><Icon name="swatch" size={14} />
          </Pick>
          <Tool name="layerCur" /><Tool name="layerPrev" /><Tool name="layerStates" />
        </Panel>
        <Grip />
        <Panel>
          <Pick w={137} value="ByLayer" label="Color" arial><Icon name="swatch" size={14} /></Pick>
          <DoubleSep />
          <Pick w={146} value="ByLayer" label="Linetype" rule={55} pad={4} arial />
          <DoubleSep />
          <Pick w={113} value="ByLayer" label="Lineweight" rule={32} pad={4} arial />
          <DoubleSep />
          <Pick w={109} value="ByColor" label="Plot style" pad={4} arial off />
        </Panel>
      </Row>

      <Work>
        <Dock>
          <DockGrip />
          <DockTools $h={378}>
            {draw.map(n => <DockTool key={n} name={n} />)}
            <TextTool type="button">A</TextTool>
            <DockTool name="addSel" />
          </DockTools>
        </Dock>
        <Canvas>
          <ModelSpace />
          <ViewLabel>[−][Top][2D Wireframe]</ViewLabel>
          <NavCube />
        </Canvas>
        <VScroll><Chevron dir="up" bold /><VThumb /><Chevron dir="down" bold /></VScroll>
        <Dock $right>
          <DockGrip />
          <DockTools $h={340}>{modify.map(n => <DockTool key={n} name={n} />)}</DockTools>
          <DockGrip />
          <DockTools $h={118}>
            {['front', 'back', 'above', 'under'].map(n => <DockTool key={n} name={n} />)}
            <Rule />
            {['textFront', 'hatchBack'].map(n => <DockTool key={n} name={n} />)}
          </DockTools>
        </Dock>
        <TabRow>
          {navPaths.map(d => (
            <NavButton key={d} type="button" aria-label="Scroll layouts">
              <svg width="13" height="13" viewBox="0 0 13 13"><path d={d} fill="#555" stroke="#555" strokeWidth="1" /></svg>
            </NavButton>
          ))}
          <Spacer $w={4} />
          <Tab w={58} on label="Model" /><Tab w={60} label="Layout1" /><Tab w={64} label="Layout2" />
          <HScroll>
            <Splitter /><Chevron dir="left" bold /><HThumb /><Chevron dir="right" bold />
          </HScroll>
        </TabRow>
      </Work>

      <CommandArea>
        <CommandGrip>
          <svg width="21" height="8" viewBox="0 0 21 8" aria-hidden="true"><path d="M1 1.500h20M1 4.500h20M1 7.500h20" stroke="#b0b0b0" strokeDasharray="1 2" /></svg>
          <button type="button" aria-label="Close command line"><svg width="11" height="11" viewBox="0 0 11 11"><path d="m1 1 9 9M10 1l-9 9" stroke="#fff" strokeWidth="2" /></svg></button>
          <button type="button" aria-label="Customize">
            <svg width="18" height="18" viewBox="0 0 18 18"><path d="M1.500 5 5 6.500 6.500 5 5 1.500C9 .500 11 4 9.500 7l7 7c1 2-1 3.500-2.500 2.500l-7-7C4 11 .500 9 1.500 5z" fill="#eee" /></svg>
          </button>
        </CommandGrip>
        <CommandBody>
          <History>{'Command: Specify opposite corner or [Fence/WPolygon/CPolygon]:\nCommand: *Cancel*'}</History>
          <Prompt onSubmit={e => e.preventDefault()}>
            <svg width="18" height="16" viewBox="0 0 18 16" aria-hidden="true"><rect x=".5" y=".5" width="17" height="14" rx="1.500" fill="#dadbe2" stroke="#a3a5ae" /><path d="m4 4 4 3.500L4 11M9 11.500h5" fill="none" stroke="#555a66" strokeWidth="1.500" /></svg>
            <Drop color="#888" />
            <CommandInput aria-label="Command" placeholder="Type a command" />
          </Prompt>
        </CommandBody>
      </CommandArea>

      <Status>
        <Coords>14.5598, 9.2683, 0.0000</Coords>
        {aids.map((n, i) => <StatusCell key={n} type="button" aria-label={n} $w={i % 5 === 4 ? 21 : 20} $on={aidsOn.includes(n)}><Icon name={n} size={15} /></StatusCell>)}
        <Spacer />
        <StatusCell type="button" $w={49}>MODEL</StatusCell>
        <StatusCell type="button" aria-label="Layout" $w={20}><Icon name="layoutTri" size={15} /></StatusCell>
        <StatusCell type="button" aria-label="Quick view" $w={21}><Icon name="quickView" /></StatusCell>
        <Spacer $w={11} />
        <StatusCell type="button" $w={48}><Icon name="annot" size={15} />1:1 <Caret color="#111" /></StatusCell>
        <StatusCell type="button" aria-label="Annotation visibility" $w={21}><Icon name="annotStar" size={15} /></StatusCell>
        <StatusCell type="button" aria-label="Auto scale" $w={20}><Icon name="annotGrey" size={15} /></StatusCell>
        <Spacer $w={5} />
        <StatusCell type="button" aria-label="Workspace" $w={20}><Icon name="gear" /></StatusCell>
        <StatusCell type="button" aria-label="Lock" $w={20}><Icon name="lock" size={15} /></StatusCell>
        <StatusCell type="button" aria-label="Hardware" $w={21}><Icon name="hardware" /></StatusCell>
        <StatusCell type="button" aria-label="Isolate" $w={26}><Icon name="bulb" size={14} /></StatusCell>
        <Spacer $w={4} />
        <StatusCell type="button" aria-label="Status menu" $w={12}><Caret color="#111" /></StatusCell>
        <StatusCell type="button" aria-label="Clean screen" $w={15}><Icon name="clean" /></StatusCell>
      </Status>
    </Window>
  );
}
